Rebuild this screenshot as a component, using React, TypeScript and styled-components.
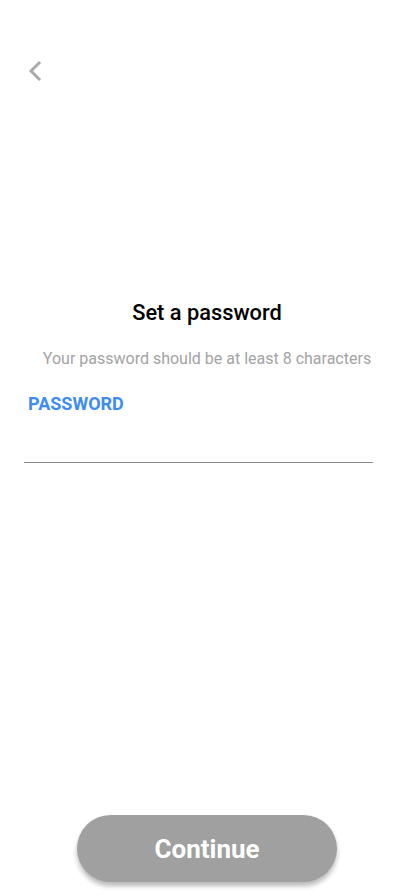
import React from "react";
import styled, { createGlobalStyle } from "styled-components";

const Global = createGlobalStyle`
  html, body { margin: 0; padding: 0; background: #fff; }
  body { font-family: Roboto, "Liberation Sans", sans-serif; }
  * { box-sizing: border-box; }
`;

const Screen = styled.div`
  width: 414px;
  height: 896px;
  display: flex;
  flex-direction: column;
  background: #fff;
`;

const BackButton = styled.button`
  margin: 58px 0 0 22px;
  width: 26px;
  height: 26px;
  padding: 0;
  border: none;
  background: none;
  display: flex;
  align-items: center;
  justify-content: center;
`;

const Title = styled.h1`
  margin: 216px 0 0;
  font-size: 21.8px;
  font-weight: 500;
  line-height: 26px;
  color: #000;
  text-align: center;
`;

const Subtitle = styled.p`
  margin: 23px 0 0;
  font-size: 16px;
  line-height: 20px;
  color: #a3a3a3;
  text-align: center;
`;

const Field = styled.div`
  margin: 25px 41px 0 24px;
  display: flex;
  flex-direction: column;
`;

const Label = styled.label`
  padding-left: 4px;
  font-size: 18px;
  font-weight: 700;
  line-height: 20px;
  color: #3d8bf7;
`;

const Input = styled.input`
  margin-top: 8px;
  height: 41px;
  border: none;
  border-bottom: 1px solid #8a8a8a;
  outline: none;
  font-size: 16px;
  background: transparent;
`;

const Spacer = styled.div`
  flex: 1;
`;

const Footer = styled.div`
  display: flex;
  justify-content: center;
  padding: 0 0 14px;
`;

const ContinueButton = styled.button`
  width: 260px;
  height: 67px;
  border: none;
  border-radius: 34px;
  background: #a0a0a0;
  color: #fff;
  font-family: Roboto, "Liberation Sans", sans-serif;
  font-size: 26px;
  font-weight: 700;
  box-shadow: 0 4px 5px rgba(0, 0, 0, 0.28);
`;

export default function App() {
  return (
    <>
      <Global />
      <Screen>
        <BackButton aria-label="Back">
          <svg width="20" height="22" viewBox="0 0 20 22" fill="none">
            <path d="M14 3 L6 11 L14 19" stroke="#aaaaaa" strokeWidth="3" strokeLinecap="square" strokeLinejoin="miter" />
          </svg>
        </BackButton>
        <Title>Set a password</Title>
        <Subtitle>Your password should be at least 8 characters</Subtitle>
        <Field>
          <Label>PASSWORD</Label>
          <Input type="password" />
        </Field>
        <Spacer />
        <Footer>
          <ContinueButton>Continue</ContinueButton>
        </Footer>
      </Screen>
    </>
  );
}
